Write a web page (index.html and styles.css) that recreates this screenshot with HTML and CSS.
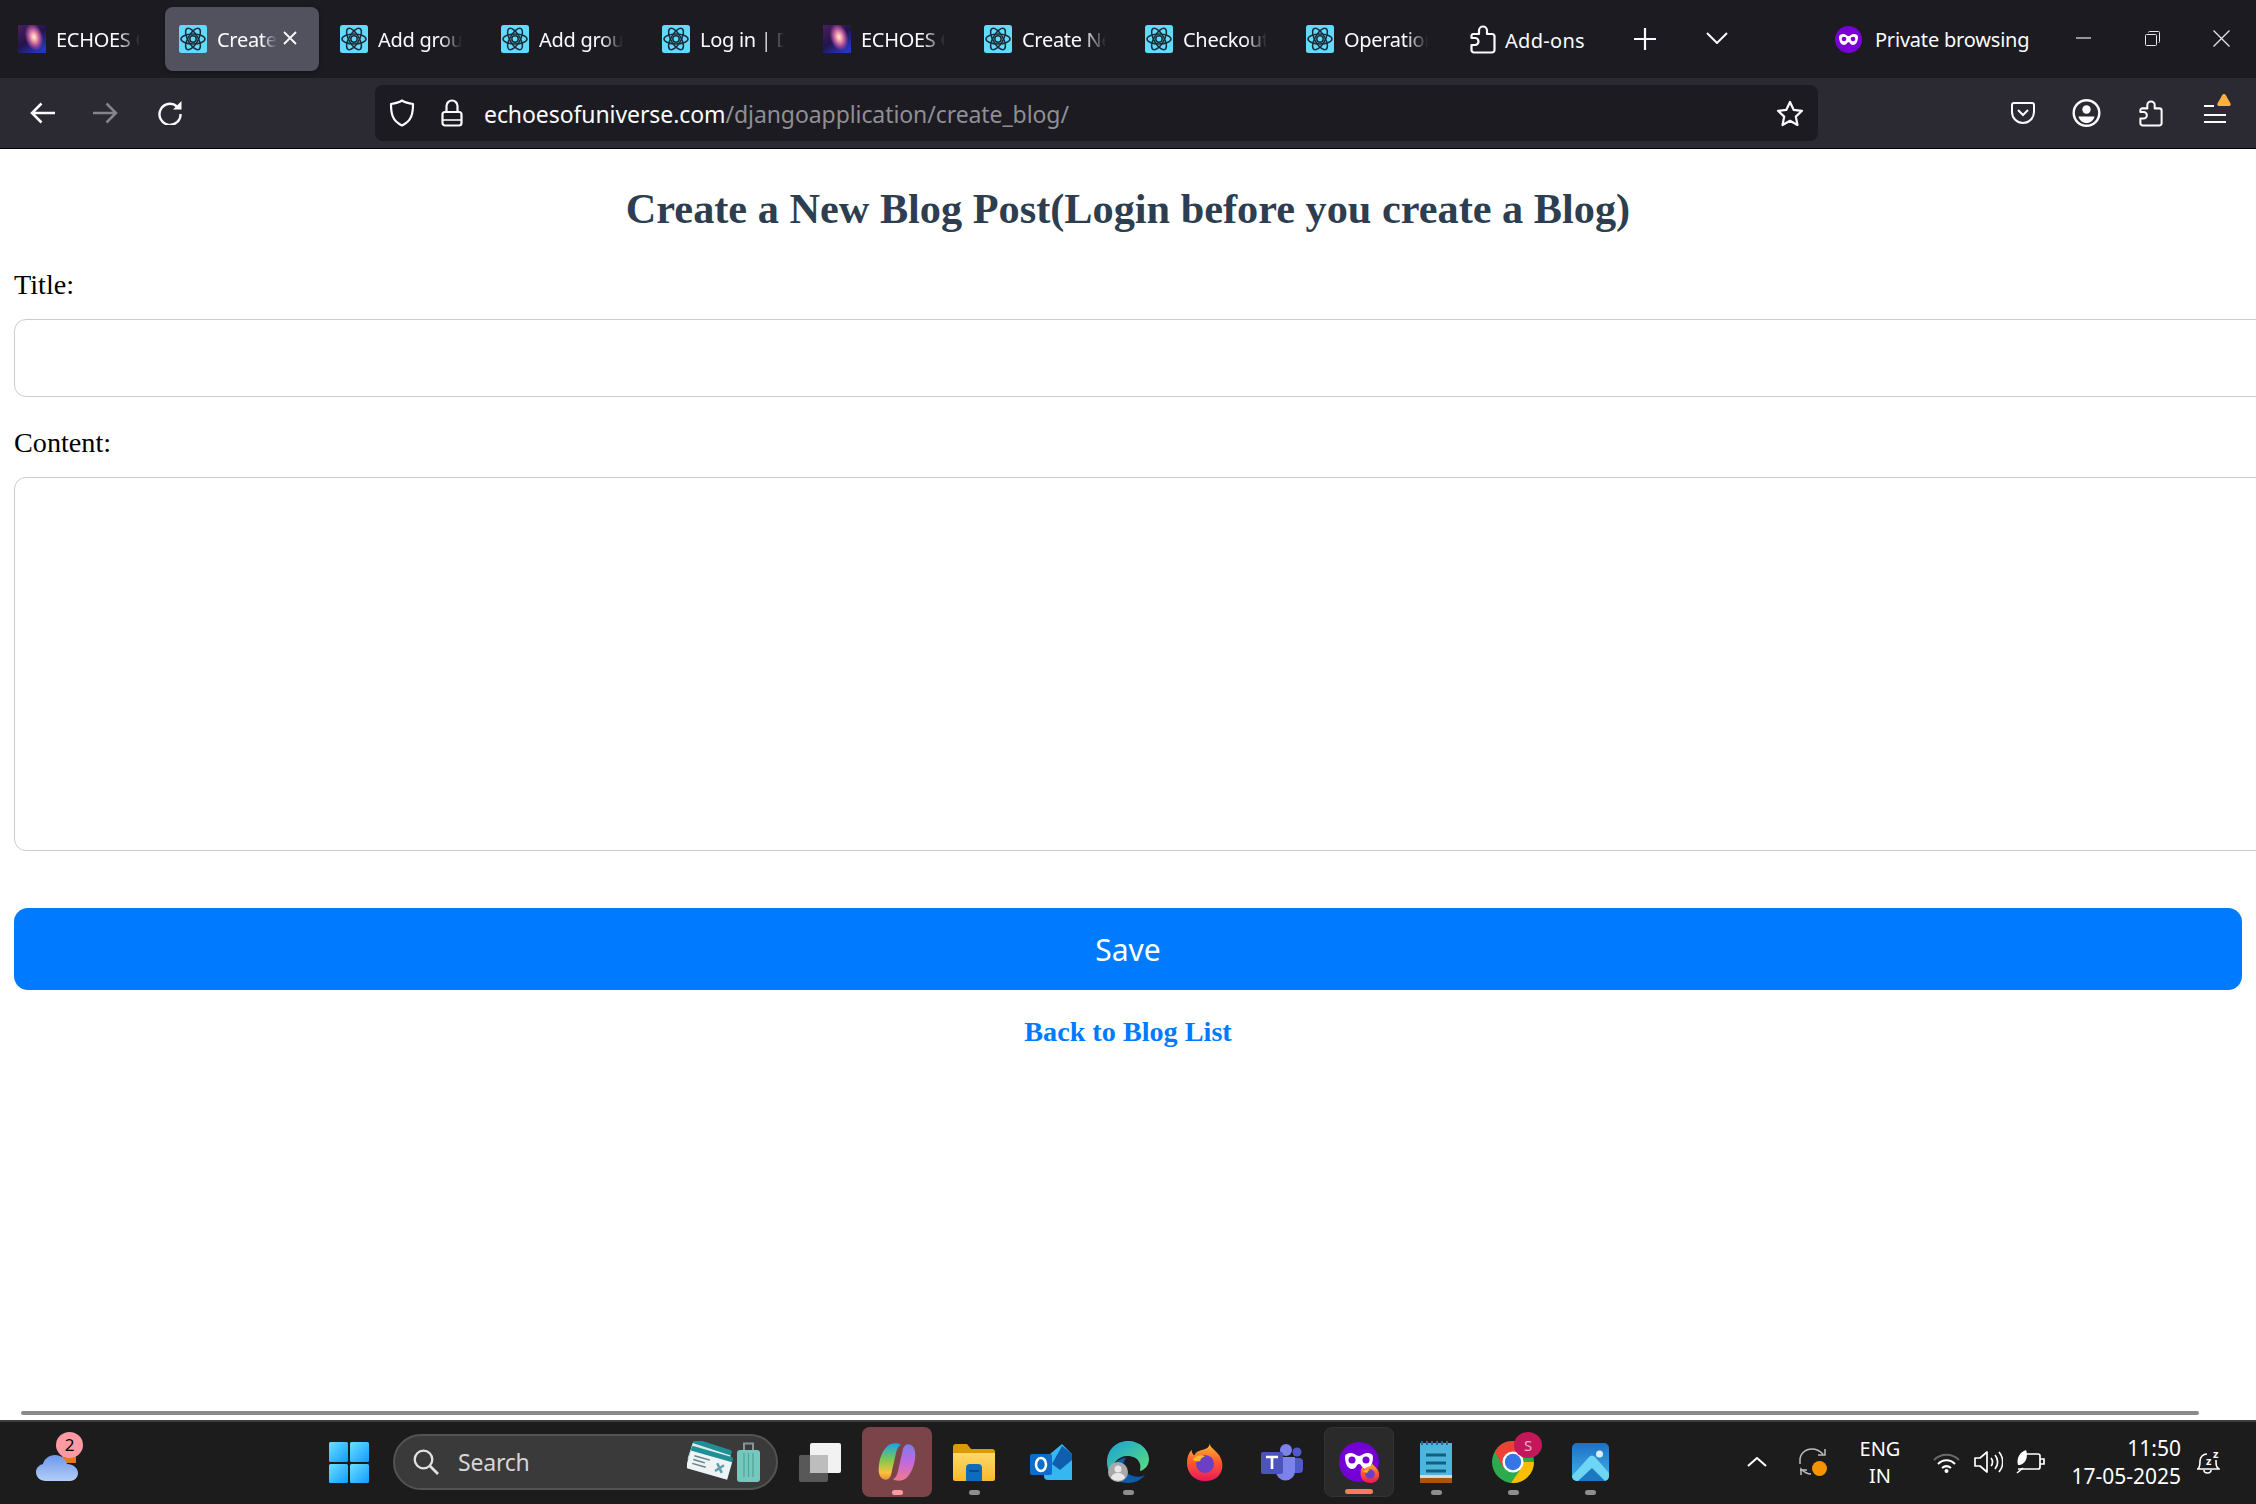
FILE: index.html
```html
<!DOCTYPE html>
<html lang="en">
<head>
<meta charset="utf-8">
<title>Create a New Blog Post</title>
<link rel="stylesheet" href="styles.css">
</head>
<body>
<svg class="defs" width="0" height="0" aria-hidden="true">
  <defs>
    <symbol id="react" viewBox="0 0 28 28">
      <rect width="28" height="28" rx="2.5" fill="#61dafb"/>
      <g fill="none" stroke="#1b2c36" stroke-width="1.5">
        <ellipse cx="14" cy="14" rx="12" ry="5"/>
        <ellipse cx="14" cy="14" rx="12" ry="5" transform="rotate(60 14 14)"/>
        <ellipse cx="14" cy="14" rx="12" ry="5" transform="rotate(120 14 14)"/>
        <circle cx="14" cy="14" r="3.2"/>
      </g>
    </symbol>
    <linearGradient id="gxbase" x1="0" y1="0" x2=".7" y2="1">
      <stop offset="0" stop-color="#4a1f5e"/>
      <stop offset=".55" stop-color="#23144a"/>
      <stop offset="1" stop-color="#2535c0"/>
    </linearGradient>
    <radialGradient id="gx">
      <stop offset="0" stop-color="#fff0dc"/>
      <stop offset=".3" stop-color="#f0a0a8"/>
      <stop offset=".65" stop-color="#a04a98"/>
      <stop offset="1" stop-color="#a04a98" stop-opacity="0"/>
    </radialGradient>
    <symbol id="galaxy" viewBox="0 0 28 28">
      <rect width="28" height="28" fill="url(#gxbase)"/>
      <ellipse cx="16" cy="12" rx="9" ry="14" fill="url(#gx)" transform="rotate(-15 16 12)"/>
    </symbol>
    <symbol id="puzzle" viewBox="0 0 26 30">
      <path d="M3 10h6V6.500a4 4 0 0 1 8 0V10h5a2.500 2.500 0 0 1 2.500 2.500V26a2.500 2.500 0 0 1-2.500 2.500H4A2.500 2.500 0 0 1 1.500 26v-5H5a3.500 3.500 0 0 0 0-7H1.500v-2A2 2 0 0 1 3 10z" fill="none" stroke="#fbfbfe" stroke-width="2.200" stroke-linejoin="round"/>
    </symbol>
    <linearGradient id="ff" x1="0" y1="0" x2="0" y2="1">
      <stop offset="0" stop-color="#ffbd2e"/>
      <stop offset=".5" stop-color="#ff5a2c"/>
      <stop offset="1" stop-color="#e8175d"/>
    </linearGradient>
    <symbol id="firefox" viewBox="0 0 40 40">
      <path d="M25 0c0 5 6 7 10 13 5 8 4 17-1 22-4 4-9 5-14 5C9 40 1 32 1 21 1 15 3 10 6 7c0 3 1 5 3 6 1-4 5-5 9-6 4-1 7-3 7-7z" fill="url(#ff)"/>
      <circle cx="20" cy="22" r="9.500" fill="#6c3fc5"/>
      <path d="M7 17c4-4 9-5 13-3-3 1-5 3-5 5-3 1-6 0-8-2z" fill="#ffb62c"/>
    </symbol>
    <linearGradient id="win" x1="0" y1="0" x2="1" y2="1">
      <stop offset="0" stop-color="#6ce0ff"/>
      <stop offset="1" stop-color="#0f9bff"/>
    </linearGradient>
    <linearGradient id="cop" x1="0" y1="0" x2="0" y2="1">
      <stop offset="0" stop-color="#1aa3e8"/>
      <stop offset=".45" stop-color="#7ec850"/>
      <stop offset=".8" stop-color="#f7c23c"/>
      <stop offset="1" stop-color="#f08a3c"/>
    </linearGradient>
    <linearGradient id="cop2" x1="0" y1="0" x2="0" y2="1">
      <stop offset="0" stop-color="#7a7ce8"/>
      <stop offset=".5" stop-color="#c468e0"/>
      <stop offset="1" stop-color="#f07a8c"/>
    </linearGradient>
    <linearGradient id="edge" x1="0" y1="0" x2="1" y2="1">
      <stop offset="0" stop-color="#1aa0d8"/>
      <stop offset="1" stop-color="#5be07a"/>
    </linearGradient>
    <linearGradient id="folder" x1="0" y1="0" x2="0" y2="1">
      <stop offset="0" stop-color="#ffd96a"/>
      <stop offset="1" stop-color="#f7b92d"/>
    </linearGradient>
    <linearGradient id="photo" x1="0" y1="0" x2="0" y2="1">
      <stop offset="0" stop-color="#1f6fc4"/>
      <stop offset="1" stop-color="#3fb5ea"/>
    </linearGradient>
    <linearGradient id="cloud" x1="0" y1="0" x2="0" y2="1">
      <stop offset="0" stop-color="#6d97ea"/>
      <stop offset="1" stop-color="#b3cdf8"/>
    </linearGradient>
  </defs>
</svg>

<header class="chrome">
  <div class="tabbar">
    <div class="tab">
      <svg class="favicon"><use href="#galaxy"/></svg>
      <span class="tab-title">ECHOES OF UNIVERSE</span>
    </div>
    <div class="tab tab-active">
      <svg class="favicon"><use href="#react"/></svg>
      <span class="tab-title">Create New Blog</span>
      <svg class="tab-close" viewBox="0 0 14 14"><path d="M1 1l12 12M13 1L1 13" stroke="#fbfbfe" stroke-width="1.800" fill="none"/></svg>
    </div>
    <div class="tab">
      <svg class="favicon"><use href="#react"/></svg>
      <span class="tab-title">Add group | Django</span>
    </div>
    <div class="tab">
      <svg class="favicon"><use href="#react"/></svg>
      <span class="tab-title">Add group | Django</span>
    </div>
    <div class="tab">
      <svg class="favicon"><use href="#react"/></svg>
      <span class="tab-title">Log in | Django</span>
    </div>
    <div class="tab">
      <svg class="favicon"><use href="#galaxy"/></svg>
      <span class="tab-title">ECHOES OF UNIVERSE</span>
    </div>
    <div class="tab">
      <svg class="favicon"><use href="#react"/></svg>
      <span class="tab-title">Create New Blog</span>
    </div>
    <div class="tab">
      <svg class="favicon"><use href="#react"/></svg>
      <span class="tab-title">Checkout Session</span>
    </div>
    <div class="tab">
      <svg class="favicon"><use href="#react"/></svg>
      <span class="tab-title">Operational Data</span>
    </div>
    <div class="tab tab-addons">
      <svg class="tab-puzzle"><use href="#puzzle"/></svg>
      <span class="addons-label">Add-ons</span>
    </div>
    <svg class="newtab" viewBox="0 0 22 22"><path d="M11 0v22M0 11h22" stroke="#fbfbfe" stroke-width="2.200"/></svg>
    <svg class="alltabs" viewBox="0 0 22 12"><path d="M1 1l10 10L21 1" stroke="#fbfbfe" stroke-width="2" fill="none"/></svg>
    <div class="private">
      <svg class="private-icon" viewBox="0 0 27 27">
        <circle cx="13.500" cy="13.500" r="13.500" fill="#7b00d6"/>
        <path d="M4 11c0-2 2-3 4-3 3 0 3.500 2 5.500 2S16 8 19 8c2 0 4 1 4 3 0 5-2.500 8-5 8-3 0-3-3-4.500-3S12 19 9 19c-2.500 0-5-3-5-8z" fill="#fff"/>
        <circle cx="9" cy="13" r="2.300" fill="#7b00d6"/>
        <circle cx="18" cy="13" r="2.300" fill="#7b00d6"/>
      </svg>
      <span class="private-label">Private browsing</span>
    </div>
    <div class="window-controls">
      <svg class="win-min" viewBox="0 0 15 2"><path d="M0 1h15" stroke="#e8e8ea" stroke-width="1.200"/></svg>
      <svg class="win-max" viewBox="0 0 15 15"><path d="M3.500 1.500A1 1 0 0 1 4.500 .5h9a1 1 0 0 1 1 1v9a1 1 0 0 1-1 1" fill="none" stroke="#e8e8ea"/><rect x=".5" y="3.500" width="11" height="11" rx="1" fill="none" stroke="#e8e8ea"/></svg>
      <svg class="win-close" viewBox="0 0 17 17"><path d="M.5.5l16 16M16.500.5l-16 16" stroke="#e8e8ea" stroke-width="1.200"/></svg>
    </div>
  </div>
  <div class="navbar">
    <svg class="nav-back" viewBox="0 0 25 22"><path d="M11.500 1.500L2 11l9.500 9.500M2 11h23" stroke="#fbfbfe" stroke-width="2.500" fill="none"/></svg>
    <svg class="nav-forward" viewBox="0 0 25 22"><path d="M13.500 1.500L23 11l-9.500 9.500M23 11H0" stroke="#85848b" stroke-width="2.500" fill="none"/></svg>
    <svg class="nav-reload" viewBox="0 0 26 24"><path d="M20 5.500A10.500 10.500 0 1 0 23.500 13" fill="none" stroke="#fbfbfe" stroke-width="2.400"/><path d="M16 8.500H24.500V0z" fill="#fbfbfe"/></svg>
    <div class="urlbar">
      <svg class="url-shield" viewBox="0 0 26 28"><path d="M13 1.500c3 2 7 3 11 3.500 0 9-1 17-11 21.500C3 22 2 14 2 5c4-.5 8-1.500 11-3.500z" fill="none" stroke="#fbfbfe" stroke-width="2.200" stroke-linejoin="round"/></svg>
      <svg class="url-lock" viewBox="0 0 22 28"><path d="M5.500 13V7a5.500 5.500 0 0 1 11 0v6" fill="none" stroke="#fbfbfe" stroke-width="2.200"/><rect x="1.500" y="13" width="19" height="13.500" rx="2.500" fill="none" stroke="#fbfbfe" stroke-width="2.200"/><path d="M1.500 21h19" stroke="#fbfbfe" stroke-width="1.600"/></svg>
      <div class="url-text">echoesofuniverse.com<span class="url-path">/djangoapplication/create_blog/</span></div>
      <svg class="url-star" viewBox="0 0 28 27"><path d="M14 2l3.600 7.800 8.400 1-6.200 5.800 1.700 8.400L14 20.800 6.500 25l1.700-8.400L2 10.800l8.400-1z" fill="none" stroke="#fbfbfe" stroke-width="2.200" stroke-linejoin="round"/></svg>
    </div>
    <div class="nav-tools">
      <svg class="tool-pocket" viewBox="0 0 24 22"><path d="M3 1h18a2 2 0 0 1 2 2v7a11 11 0 0 1-22 0V3a2 2 0 0 1 2-2z" fill="none" stroke="#fbfbfe" stroke-width="2"/><path d="M7 8l5 5 5-5" fill="none" stroke="#fbfbfe" stroke-width="2"/></svg>
      <svg class="tool-account" viewBox="0 0 29 28"><circle cx="14.500" cy="14" r="12.800" fill="none" stroke="#fbfbfe" stroke-width="2.400"/><circle cx="14.500" cy="10.500" r="4.200" fill="#fbfbfe"/><path d="M6.500 17.500h16c-1 4-4 6.500-8 6.500s-7-2.500-8-6.500z" fill="#fbfbfe"/></svg>
      <svg class="tool-puzzle"><use href="#puzzle"/></svg>
      <div class="tool-menu">
        <svg class="menu-lines" viewBox="0 0 22 20"><path d="M0 2h10M0 11h22M0 18h22" stroke="#fbfbfe" stroke-width="2.200"/></svg>
        <svg class="menu-alert" viewBox="0 0 14 12"><path d="M7 0c1 0 1.500.5 2 1.500l4.500 8c.5 1.200 0 2.500-1.500 2.500H2C.5 12 0 10.700.5 9.500l4.500-8C5.500.5 6 0 7 0z" fill="#ffb13d"/></svg>
      </div>
    </div>
  </div>
</header>

<main class="page">
  <h1 class="page-title">Create a New Blog Post(Login before you create a Blog)</h1>
  <form class="blog-form">
    <label class="field-label" for="title">Title:</label>
    <input class="field field-title" id="title" type="text">
    <label class="field-label field-label-second" for="content">Content:</label>
    <textarea class="field field-content" id="content"></textarea>
    <button class="save" type="button">Save</button>
  </form>
  <a class="back" href="#">Back to Blog List</a>
  <div class="hscroll"></div>
</main>

<footer class="taskbar">
  <div class="weather">
    <svg class="weather-icon" viewBox="0 0 42 26"><path d="M10 26C4 26 0 22 0 17c0-4 3-7 7-8 1-5 6-9 12-9s11 4 12 9c6 0 11 4 11 9 0 4-3 8-8 8z" fill="url(#cloud)"/></svg>
    <span class="weather-sun"></span>
    <span class="weather-badge">2</span>
  </div>
  <div class="task-center">
    <svg class="start" viewBox="0 0 40 41">
      <rect width="19" height="20" rx="1.500" fill="url(#win)"/>
      <rect x="21" width="19" height="20" rx="1.500" fill="url(#win)"/>
      <rect y="22" width="19" height="19" rx="1.500" fill="url(#win)"/>
      <rect x="21" y="22" width="19" height="19" rx="1.500" fill="url(#win)"/>
    </svg>
    <div class="search">
      <svg class="search-icon" viewBox="0 0 26 26"><circle cx="10.500" cy="10.500" r="8.800" fill="none" stroke="#e2e2e2" stroke-width="2.300"/><path d="M17 17l8 8" stroke="#e2e2e2" stroke-width="2.600"/></svg>
      <span class="search-text">Search</span>
      <svg class="search-deco" viewBox="0 0 74 41">
        <g transform="rotate(18 22 20)">
          <rect x="1" y="3" width="40" height="22" rx="2" fill="#1f8f96"/>
          <rect x="1" y="8" width="40" height="17" fill="#dfe8ea"/>
        </g>
        <g transform="rotate(16 22 22)">
          <rect x="1" y="10" width="43" height="23" rx="2" fill="#1f8f96"/>
          <rect x="1" y="15" width="43" height="18" fill="#eef3f4"/>
          <path d="M6 19h16M6 23h12M6 27h14" stroke="#66808c" stroke-width="1.500"/>
          <path d="M30 20l7 8M37 20l-7 8" stroke="#5f9fb0" stroke-width="2.500"/>
        </g>
        <rect x="50" y="9" width="23" height="32" rx="3" fill="#74c8bd"/>
        <path d="M57 12v24M61.500 12v24M66 12v24" stroke="#4da59b" stroke-width="1.200"/>
        <path d="M57 9V2.500h9V9" fill="none" stroke="#8b9397" stroke-width="2"/>
      </svg>
    </div>
    <div class="apps">
      <div class="app">
        <svg class="icon-taskview" viewBox="0 0 42 39"><rect x="11" width="31" height="30" rx="2" fill="#f2f2f2"/><rect y="12" width="29" height="27" rx="2" fill="#5d5d5d" fill-opacity=".92"/><rect x="11" y="12" width="18" height="18" fill="#bdbdbd"/></svg>
      </div>
      <div class="app app-copilot">
        <svg class="icon-copilot" viewBox="0 0 38 38">
          <path d="M13 1c3-1 8-1 10 1-3 1-4 4-5 8l-5 22c-1 4-5 6-8 4-4-2-5-8-4-14C2 12 7 3 13 1z" fill="url(#cop)"/>
          <path d="M25 37c-3 1-8 1-10-1 3-1 4-4 5-8l5-22c1-4 5-6 8-4 4 2 5 8 4 14-1 9-6 19-12 21z" fill="url(#cop2)"/>
        </svg>
        <span class="run run-pink"></span>
      </div>
      <div class="app">
        <svg class="icon-explorer" viewBox="0 0 42 37"><path d="M0 3a3 3 0 0 1 3-3h11l4 5h21a3 3 0 0 1 3 3v6H0z" fill="#d99a05"/><path d="M0 9h42v26a2 2 0 0 1-2 2H2a2 2 0 0 1-2-2z" fill="url(#folder)"/><path d="M13 37V24a4 4 0 0 1 4-4h8a4 4 0 0 1 4 4v13z" fill="#0f6cbd"/><path d="M16 27h10" stroke="#0b4a85" stroke-width="2"/></svg>
        <span class="run"></span>
      </div>
      <div class="app">
        <svg class="icon-outlook" viewBox="0 0 42 36"><path d="M20 10L32 0l10 10v26H18a4 4 0 0 1-4-4V14z" fill="#35b8f1"/><path d="M22 20L32 2l10 8v6L30 26z" fill="#0f5fae"/><rect y="10" width="22" height="21" rx="2" fill="#0f6cc9"/><ellipse cx="11" cy="20.500" rx="5" ry="6.500" fill="none" stroke="#fff" stroke-width="2.600"/></svg>
      </div>
      <div class="app">
        <svg class="icon-edge" viewBox="0 0 42 42">
          <path d="M21 0C9 0 0 9 0 21c0 4 1 8 3 11 2-9 8-17 17-17 6 0 11 2 13 8 1 2 0 5 0 7 5-1 9-6 9-12C42 8 32 0 21 0z" fill="url(#edge)"/>
          <path d="M3 32c4 7 11 10 18 10 7 0 13-3 17-8-5 3-13 2-18-2-4-4-5-10-1-15C12 17 5 23 3 32z" fill="#0d5cab"/>
          <circle cx="11" cy="31" r="10" fill="#a9a9a9"/>
          <circle cx="11" cy="28" r="3.500" fill="#e7e7e7"/>
          <path d="M4 37c1-4 4-5 7-5s6 1 7 5a10 10 0 0 1-14 0z" fill="#e7e7e7"/>
        </svg>
        <span class="run"></span>
      </div>
      <div class="app">
        <svg class="icon-firefox"><use href="#firefox"/></svg>
      </div>
      <div class="app">
        <svg class="icon-teams" viewBox="0 0 42 37">
          <circle cx="36" cy="8" r="4.500" fill="#5059c9"/>
          <rect x="30" y="14" width="12" height="15" rx="4" fill="#5059c9"/>
          <circle cx="25" cy="6" r="6" fill="#7b83eb"/>
          <path d="M15 13h19v14a9.500 9.500 0 0 1-19 0z" fill="#7b83eb"/>
          <rect y="8" width="22" height="22" rx="2" fill="#4b53bc"/>
          <path d="M5 13h12M11 13v12" stroke="#fff" stroke-width="2.600"/>
        </svg>
      </div>
      <div class="app app-private">
        <svg class="icon-private" viewBox="0 0 41 40">
          <circle cx="20" cy="20" r="20" fill="#7400d6"/>
          <path d="M6 15c0-3 3-4 6-4 4 0 5 3 8 3s4-3 8-3c3 0 6 1 6 4 0 7-3 12-7 12-5 0-4-5-7-5s-2 5-7 5c-4 0-7-5-7-12z" fill="#fff"/>
          <circle cx="13" cy="18" r="3.500" fill="#7400d6"/>
          <circle cx="27" cy="18" r="3.500" fill="#7400d6"/>
        </svg>
        <svg class="private-ff"><use href="#firefox"/></svg>
        <span class="run run-wide"></span>
      </div>
      <div class="app">
        <svg class="icon-notepad" viewBox="0 0 32 42">
          <rect y="2" width="32" height="34" fill="#4cb6dc"/>
          <rect y="34" width="32" height="3" fill="#d8d8d8"/>
          <rect y="37" width="32" height="5" fill="#a5560f"/>
          <path d="M2 0v4M7 0v4M12 0v4M17 0v4M22 0v4M27 0v4" stroke="#1f6e8c" stroke-width="2"/>
          <path d="M6 14h20M6 22h20M6 30h20" stroke="#125f80" stroke-width="3"/>
        </svg>
        <span class="run"></span>
      </div>
      <div class="app">
        <svg class="icon-chrome" viewBox="0 0 42 42">
          <circle cx="21" cy="21" r="21" fill="#2da94f"/>
          <path d="M21 21L39.200 10.500A21 21 0 0 0 2.800 10.500L11 26z" fill="#ea4335"/>
          <path d="M21 21h21a21 21 0 0 1-23 20.900L30 26z" fill="#fbbc04"/>
          <circle cx="21" cy="21" r="10.500" fill="#fff"/>
          <circle cx="21" cy="21" r="8.200" fill="#3476e5"/>
        </svg>
        <span class="chrome-badge">S</span>
        <span class="run"></span>
      </div>
      <div class="app">
        <svg class="icon-photos" viewBox="0 0 37 38">
          <rect width="37" height="38" rx="5" fill="url(#photo)"/>
          <circle cx="27.500" cy="11" r="3.500" fill="#dcecf8"/>
          <path d="M0 33l17-19c2-2 4-2 6 0l14 16v3a5 5 0 0 1-5 5H5a5 5 0 0 1-5-5z" fill="#6ed5f5"/>
          <path d="M6 38l14-13 13 13z" fill="#1c78c0"/>
        </svg>
        <span class="run"></span>
      </div>
    </div>
  </div>
  <div class="tray">
    <svg class="tray-chevron" viewBox="0 0 20 10"><path d="M1 9l9-8 9 8" fill="none" stroke="#fff" stroke-width="2"/></svg>
    <div class="tray-sync">
      <svg class="sync-icon" viewBox="0 0 28 28"><path d="M1 16V12C1 6 6 1 13 1c5 0 8 2 11 5M26 1v6h-7M1 22h7M2 27v-6c3 3 6 5 10 5" fill="none" stroke="#bdbdbd" stroke-width="1.500"/></svg>
      <span class="sync-dot"></span>
    </div>
    <div class="tray-lang"><span>ENG</span><span>IN</span></div>
    <svg class="tray-wifi" viewBox="0 0 27 21"><path d="M1 8C8 1 19 1 26 8" fill="none" stroke="#6b6b6b" stroke-width="1.800"/><path d="M5 12c5-5 12-5 17 0M9 16c3-2.500 6-2.500 9 0" fill="none" stroke="#fff" stroke-width="2"/><circle cx="13.500" cy="19" r="2" fill="#fff"/></svg>
    <svg class="tray-sound" viewBox="0 0 29 24"><path d="M1 8h5l7-6v20l-7-6H1z" fill="none" stroke="#fff" stroke-width="1.700" stroke-linejoin="round"/><path d="M17 8c2 2 2 6 0 8M21 5c3.500 4 3.500 10 0 14M25 2c5 6 5 14 0 20" fill="none" stroke="#fff" stroke-width="1.700"/></svg>
    <svg class="tray-power" viewBox="0 0 29 24"><path d="M9 4h13a2 2 0 0 1 2 2v11a2 2 0 0 1-2 2H2" fill="none" stroke="#fff" stroke-width="1.700"/><path d="M24 9h4v5h-4" fill="none" stroke="#fff" stroke-width="1.700"/><path d="M2 15C0 8 4 2 10 0c2 5 1 13-6 15z" fill="#fff"/><path d="M1 23l6-5" stroke="#fff" stroke-width="1.500"/></svg>
    <div class="tray-clock"><span>11:50</span><span>17-05-2025</span></div>
    <svg class="tray-bell" viewBox="0 0 24 25"><path d="M2 19c2-2 2-4 2-8 0-4 3-7 7-7M20 10c0 5 0 7 3 9H1M8 20c0 4 7 4 7 0" fill="none" stroke="#fff" stroke-width="1.600"/><text class="bell-z" x="10" y="15">z</text><text class="bell-z" x="17" y="8">z</text></svg>
  </div>
</footer>
</body>
</html>
```
FILE: styles.css
```css
* { box-sizing: border-box; }

html, body { height: 100%; }

body {
  margin: 0;
  display: flex;
  flex-direction: column;
  height: 1504px;
  overflow: hidden;
  background: #fff;
  font-family: "Liberation Serif", serif;
}

.defs { position: absolute; }

svg { display: block; flex: none; }

/* browser chrome */
.chrome {
  flex: none;
  font-family: "Noto Sans", sans-serif;
  color: #fbfbfe;
  border-bottom: 1px solid #000;
}

.tabbar {
  height: 78px;
  background: #1c1b22;
  display: flex;
  align-items: center;
}

.tab {
  width: 161px;
  height: 64px;
  flex: none;
  display: flex;
  align-items: center;
  gap: 10px;
  padding-left: 18px;
  font-size: 20px;
  position: relative;
}

.tab-active::before {
  content: "";
  position: absolute;
  left: 4px;
  right: 3px;
  top: 0;
  bottom: 0;
  background: #52525e;
  border-radius: 8px;
  box-shadow: 0 1px 4px rgba(0, 0, 0, .4);
}

.favicon, .tab-title, .tab-close { position: relative; }

.favicon { width: 28px; height: 28px; }

.tab-title {
  width: 84px;
  overflow: hidden;
  white-space: nowrap;
  letter-spacing: -.3px;
  line-height: 28px;
  padding-top: 2px;
  -webkit-mask-image: linear-gradient(to right, #000 74%, transparent 100%);
  mask-image: linear-gradient(to right, #000 74%, transparent 100%);
}

.tab-active .tab-title { width: 60px; }

.tab-close { width: 14px; height: 14px; margin-left: -4px; margin-top: -2px; }

.tab-addons {
  width: auto;
  padding-left: 21px;
  gap: 9px;
}

.addons-label {
  letter-spacing: .3px;
  padding-top: 2px;
}

.tab-puzzle { width: 26px; height: 30px; }

.newtab { width: 22px; height: 22px; margin-left: 49px; }

.alltabs { width: 22px; height: 12px; margin-left: 50px; margin-top: -2px; }

.private {
  display: flex;
  align-items: center;
  gap: 13px;
  margin-left: 107px;
  font-size: 20px;
  letter-spacing: -.2px;
}

.private-label { padding-top: 1px; }

.private-icon { width: 27px; height: 27px; }

.window-controls {
  display: flex;
  align-items: center;
  margin-left: 47px;
  margin-top: -2px;
}

.win-min { width: 15px; height: 2px; }
.win-max { width: 15px; height: 15px; margin-left: 54px; }
.win-close { width: 17px; height: 17px; margin-left: 53px; }

.navbar {
  height: 70px;
  background: #2b2a33;
  display: flex;
  align-items: center;
}

.nav-back { width: 25px; height: 22px; margin-left: 30px; }
.nav-forward { width: 25px; height: 22px; margin-left: 38px; }
.nav-reload { width: 26px; height: 24px; margin-left: 39px; }

.urlbar {
  width: 1443px;
  height: 56px;
  margin-left: 192px;
  background: #1c1b22;
  border-radius: 8px;
  display: flex;
  align-items: center;
  padding-left: 14px;
}

.url-shield { width: 26px; height: 28px; }
.url-lock { width: 22px; height: 28px; margin-left: 26px; }

.url-text {
  margin-left: 21px;
  width: 1292px;
  padding-top: 2px;
  font-size: 23px;
  letter-spacing: -.08px;
  white-space: nowrap;
}

.url-path { color: #8f8f94; }

.url-star { width: 28px; height: 27px; }

.nav-tools {
  display: flex;
  align-items: center;
  margin-left: 193px;
}

.tool-pocket { width: 24px; height: 22px; }
.tool-account { width: 29px; height: 28px; margin-left: 37px; }
.tool-puzzle { width: 24px; height: 28px; margin-left: 38px; }

.tool-menu { position: relative; margin-left: 41px; width: 22px; height: 20px; margin-top: 2px; }
.menu-lines { width: 22px; height: 20px; }
.menu-alert { position: absolute; left: 13px; top: -10px; width: 14px; height: 12px; }

/* page */
.page {
  flex: 1;
  min-height: 0;
  position: relative;
  padding: 0 14px;
  overflow: hidden;
  text-align: center;
}

.page-title {
  margin: 36px 0 0;
  font-size: 42.300px;
  line-height: 48px;
  font-weight: 700;
  color: #2c3e50;
}

.blog-form {
  display: flex;
  flex-direction: column;
  align-items: flex-start;
  margin-top: 36px;
  text-align: left;
}

.field-label {
  display: block;
  font-size: 28.200px;
  line-height: 32px;
  color: #000;
  margin-bottom: 18px;
}

.field-label-second { margin-top: 30px; }

.field {
  display: block;
  width: calc(100% + 60px);
  flex: none;
  border: 1.500px solid #ccc;
  border-radius: 12px;
  background: #fff;
  padding: 16px;
  resize: none;
  outline: none;
}

.field-title { height: 78px; }
.field-content { height: 374px; }

.save {
  margin-top: 57px;
  width: 100%;
  height: 82px;
  border: 0;
  border-radius: 14px;
  background: #007bff;
  color: #fff;
  font-family: "Noto Sans", sans-serif;
  font-size: 30px;
}

.back {
  display: block;
  margin-top: 26px;
  font-size: 28.200px;
  line-height: 32px;
  font-weight: 700;
  color: #007bff;
  text-decoration: none;
}

.hscroll {
  position: absolute;
  left: 21px;
  bottom: 5px;
  width: 2178px;
  height: 4px;
  border-radius: 2px;
  background: #8a8a8a;
}

/* taskbar */
.taskbar {
  flex: none;
  height: 84px;
  padding-bottom: 2px;
  background: #1c1c1c;
  border-top: 2px solid #3d3d3d;
  display: flex;
  align-items: center;
  font-family: "Noto Sans", sans-serif;
  color: #fff;
}

.weather {
  position: relative;
  width: 42px;
  height: 26px;
  margin-left: 36px;
  margin-top: 12px;
  flex: none;
}

.weather-icon { position: relative; width: 42px; height: 26px; z-index: 1; }

.weather-sun {
  position: absolute;
  left: 26px;
  top: -6px;
  width: 14px;
  height: 14px;
  background: #e8741c;
}

.weather-badge {
  position: absolute;
  left: 20px;
  top: -23px;
  width: 27px;
  height: 26px;
  border-radius: 50%;
  background: #ff99a4;
  color: #000;
  font-size: 17px;
  line-height: 25px;
  text-align: center;
  z-index: 2;
}

.task-center {
  display: flex;
  align-items: center;
  margin-left: 251px;
  height: 100%;
}

.start { width: 40px; height: 41px; }

.search {
  width: 385px;
  height: 56px;
  margin-left: 24px;
  border: 2px solid #535353;
  border-radius: 28px;
  background: #3a3a3a;
  display: flex;
  align-items: center;
  padding-left: 18px;
}

.search-icon { width: 26px; height: 26px; }

.search-text {
  margin-left: 19px;
  width: 229px;
  font-size: 23px;
  letter-spacing: -.2px;
  color: #d6d6d6;
}

.search-deco { width: 74px; height: 41px; margin-top: -2px; }

.apps {
  display: flex;
  align-items: center;
  gap: 7px;
  margin-left: 7px;
}

.app {
  position: relative;
  flex: none;
  width: 70px;
  height: 70px;
  display: flex;
  align-items: center;
  justify-content: center;
  border-radius: 8px;
}

.app-copilot { background: #7b4448; }
.app-private { background: #2a2a2a; border: 1px solid #333; }

.icon-taskview { width: 42px; height: 39px; }
.icon-copilot { width: 38px; height: 38px; }
.icon-explorer { width: 42px; height: 37px; }
.icon-outlook { width: 42px; height: 36px; }
.icon-edge { width: 42px; height: 42px; }
.icon-firefox { width: 38px; height: 38px; }
.icon-teams { width: 42px; height: 37px; }
.icon-private { width: 41px; height: 40px; }
.icon-notepad { width: 32px; height: 42px; }
.icon-chrome { width: 42px; height: 42px; }
.icon-photos { width: 37px; height: 38px; }

.run {
  position: absolute;
  left: 50%;
  bottom: 2px;
  width: 11px;
  height: 5px;
  margin-left: -5.500px;
  border-radius: 3px;
  background: #8e8e8e;
}

.run-pink { background: #ff99a4; }
.run-wide { width: 28px; margin-left: -14px; background: #f97a5c; }

.private-ff {
  position: absolute;
  left: 35px;
  top: 35px;
  width: 20px;
  height: 20px;
}

.chrome-badge {
  position: absolute;
  left: 36px;
  top: 5px;
  width: 28px;
  height: 26px;
  border-radius: 50%;
  background: #c2185b;
  color: #f3b0c8;
  font-size: 15px;
  line-height: 26px;
  text-align: center;
}

.tray {
  display: flex;
  align-items: center;
  height: 100%;
  margin-left: 122px;
}

.tray-chevron { width: 20px; height: 10px; }

.tray-sync { position: relative; width: 28px; height: 28px; margin-left: 32px; }
.sync-icon { width: 28px; height: 28px; }

.sync-dot {
  position: absolute;
  left: 13px;
  top: 13px;
  width: 15px;
  height: 15px;
  border-radius: 50%;
  background: #f59300;
}

.tray-lang {
  display: flex;
  flex-direction: column;
  align-items: center;
  width: 44px;
  margin-left: 31px;
  font-size: 20px;
  line-height: 27px;
}

.tray-wifi { width: 27px; height: 21px; margin-left: 31px; }
.tray-sound { width: 29px; height: 24px; margin-left: 14px; }
.tray-power { width: 29px; height: 24px; margin-left: 13px; }

.tray-clock {
  display: flex;
  flex-direction: column;
  align-items: flex-end;
  width: 108px;
  margin-left: 28px;
  font-size: 21px;
  line-height: 28px;
  white-space: nowrap;
}

.tray-bell { width: 24px; height: 25px; margin-left: 15px; }

.bell-z {
  font-family: "Noto Sans", sans-serif;
  font-size: 11px;
  font-weight: 700;
  fill: #fff;
}
```
